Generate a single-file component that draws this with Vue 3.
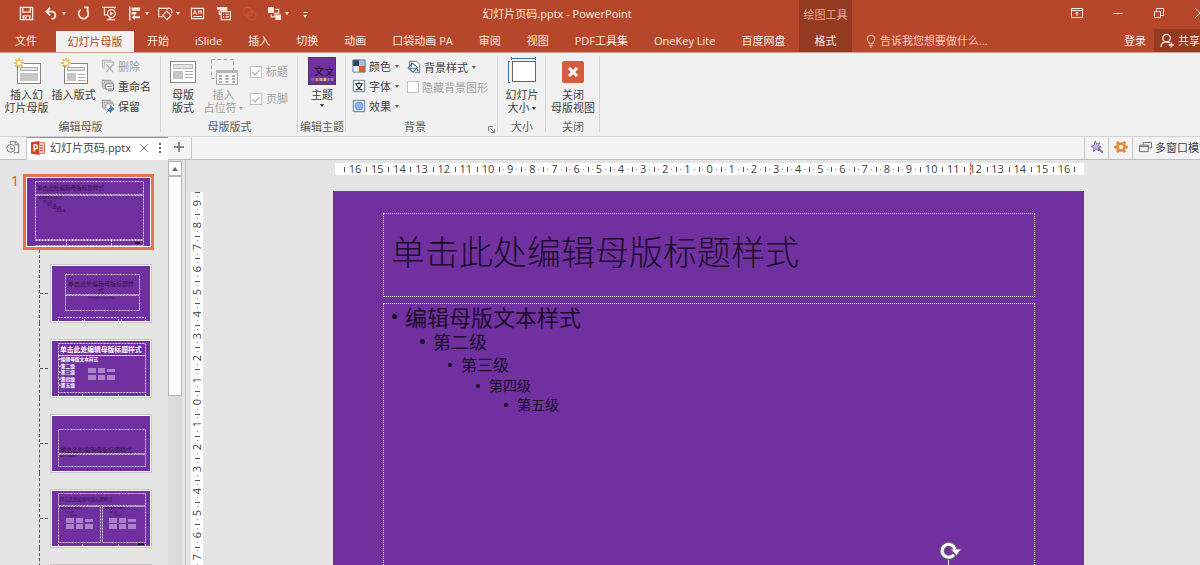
<script setup>
import { ref } from 'vue'

const tabsBefore = ['开始', 'iSlide', '插入', '切换', '动画', '口袋动画 PA', '审阅', '视图', 'PDF工具集', 'OneKey Lite', '百度网盘']
const hUnits = Array.from({ length: 33 }, (_, i) => Math.abs(16 - i))
const vUnits = Array.from({ length: 19 }, (_, i) => Math.abs(9 - i))
const levels = ['编辑母版文本样式', '第二级', '第三级', '第四级', '第五级']
const showTitle = ref(true)
const showFooter = ref(true)
const hideBg = ref(false)
const tell = ref('')
</script>

<template>
  <div class="app">
    <header class="head">
      <div class="title-row">
        <div class="qat">
          <button class="q" aria-label="保存">
            <svg viewBox="0 0 16 16"><path d="M1.500 1.500h13v13h-13zM4 1.500v5h8v-5M4.500 14.500v-4h7v4" fill="none" stroke="currentColor" stroke-width="1.500" /><path d="M6 11.500h2v3H6z" fill="currentColor" /></svg>
          </button>
          <button class="q split" aria-label="撤消">
            <svg viewBox="0 0 16 16"><path d="M2.500 6H9.500a4 4 0 0 1 0 7.500H8M6.500 2 2.500 6l4 4" fill="none" stroke="currentColor" stroke-width="2" /></svg><i class="caret"></i>
          </button>
          <button class="q" aria-label="重复">
            <svg viewBox="0 0 16 16"><path d="M5 4a5.200 5.200 0 1 0 6.500.500M8.500 1.500h4v4.500" fill="none" stroke="currentColor" stroke-width="1.800" /></svg>
          </button>
          <button class="q" aria-label="从头开始">
            <svg viewBox="0 0 16 16"><path d="M0 1.500h15M2.500 1.500v8h4M13.500 1.500v2M5 14.500h9" fill="none" stroke="currentColor" stroke-width="1.200" /><circle cx="10" cy="8" r="4.200" fill="none" stroke="currentColor" stroke-width="1.200" /><path d="M8.700 5.800 12.500 8l-3.800 2.200zM7 12.500h3v2H7z" fill="currentColor" /></svg>
          </button>
          <button class="q split" aria-label="对齐">
            <svg viewBox="0 0 16 16"><path d="M3 .5v15" stroke="currentColor" stroke-width="1.500" /><path d="M5 1.500h9v3.500H5zM5 6.500h5v2.500H5zM5 12l3.500-3v2h5.500v2H8.500v2z" fill="currentColor" /></svg><i class="caret"></i>
          </button>
          <button class="q split" aria-label="形状">
            <svg viewBox="0 0 16 16"><g fill="none" stroke="currentColor" stroke-width="1.200"><path d="M5 11.500H.8v-9h9V4" /><path d="M9.500 5.500 14 10l-4.500 4.500L5 10z" /><path d="M10 2.600a3.600 3.600 0 0 1 4.500 5" /></g></svg><i class="caret"></i>
          </button>
          <button class="q" aria-label="文本框">
            <svg viewBox="0 0 16 16"><path d="M1.500 2.500h13v11h-13zM8.500 5.500h4.500M8.500 7.500h4.500M3.500 11.200h9.500" fill="none" stroke="currentColor" stroke-width="1.200" /><path d="M3.300 9 5.200 4.700 7.100 9M4 7.600h2.400" fill="none" stroke="currentColor" /></svg>
          </button>
          <button class="q" aria-label="版式">
            <svg viewBox="0 0 16 16"><path d="M1 1h11v4H4V4H1z" fill="currentColor" /><path d="M5.500 6h10v8.500h-10zM7.500 8.800h1M10 8.800h4M7.500 11.500h1M10 11.500h4M3.500 5v4h2" fill="none" stroke="currentColor" stroke-width="1.300" /></svg>
          </button>
          <button class="q faded" aria-label="合并形状" disabled>
            <svg viewBox="0 0 16 16"><g fill="none" stroke="currentColor" stroke-width="1.300"><circle cx="6" cy="6" r="4.500" /><circle cx="10.500" cy="10" r="4.500" /></g></svg>
          </button>
          <button class="q split" aria-label="组合">
            <svg viewBox="0 0 16 16"><path d="M1 1h6.500v6.500H1zM9 9h6v6H9z" fill="currentColor" /><path d="M9 3.500h3.500V7.500H8.500v4H4.500V9" fill="none" stroke="currentColor" stroke-width="1.300" /></svg><i class="caret"></i>
          </button>
          <button class="q more" aria-label="自定义快速访问工具栏"><i class="dash"></i><i class="caret"></i></button>
        </div>
        <h1 class="title">幻灯片页码.pptx - PowerPoint</h1>
        <div class="ctx ctx-name">绘图工具</div>
        <div class="end win">
          <button aria-label="功能区显示选项"><svg viewBox="0 0 12 12"><path d="M.5 1.500h11v9H.5zM.5 3.500h11M6 9V5M4 7l2-2 2 2" fill="none" stroke="currentColor" /></svg></button>
          <button aria-label="最小化"><svg viewBox="0 0 12 12"><path d="M1.500 6.500h9" stroke="currentColor" /></svg></button>
          <button aria-label="还原"><svg viewBox="0 0 12 12"><path d="M1.500 4.500h6v6h-6zM3.500 4V1.500h7v7H8" fill="none" stroke="currentColor" /></svg></button>
          <button aria-label="关闭"><svg viewBox="0 0 12 12"><path d="m1.500 1.500 9 9M10.500 1.500l-9 9" stroke="currentColor" /></svg></button>
        </div>
      </div>
      <div class="tab-row">
        <nav class="tabs">
          <button class="tab file">文件</button>
          <button class="tab on">幻灯片母版</button>
          <button v-for="t in tabsBefore" :key="t" class="tab">{{ t }}</button>
        </nav>
        <button class="ctx">格式</button>
        <div class="end tools">
          <label class="tell">
            <svg viewBox="0 0 12 16"><path d="M4 11.500C4 9 1.500 8.500 1.500 5.500a4.500 4.500 0 0 1 9 0c0 3-2.500 3.500-2.500 6zM4 13.500h4M5 15.300h2" fill="none" stroke="currentColor" stroke-width="1.100" /></svg>
            <input v-model="tell" type="text" placeholder="告诉我您想要做什么..." aria-label="告诉我您想要做什么">
          </label>
          <button class="login">登录</button>
          <button class="share">
            <svg viewBox="0 0 16 16"><circle cx="7" cy="5.500" r="4" fill="none" stroke="currentColor" stroke-width="1.400" /><path d="M1 15c0-3.500 2.500-5.500 6-5.500 1.500 0 2.500.3 3.500 1M12 10v5.500M9.300 12.800h5.500" fill="none" stroke="currentColor" stroke-width="1.400" /></svg>
            共享
          </button>
        </div>
      </div>
    </header>

    <section class="ribbon" aria-label="幻灯片母版">
      <div class="group g-edit">
        <div class="body">
          <button class="big">
            <svg class="i28" viewBox="0 0 28 28"><rect x="4.500" y="6.500" width="23" height="20" fill="#fff" stroke="#858585" /><path d="M7.500 10.500h17v3h-17z" fill="#e4e4e4" stroke="#aaa" /><path d="M7 16h18v8H7z" fill="#c6c6c6" /><g stroke="#ecc46c" stroke-width="2"><path d="M6 1v10M1 6h10M2.500 2.500l7 7M9.500 2.500l-7 7" /></g><circle cx="6" cy="6" r="2" fill="#fff8e0" /></svg>
            <span>插入幻<br>灯片母版</span>
          </button>
          <button class="big">
            <svg class="i28" viewBox="0 0 28 28"><rect x="4.500" y="6.500" width="23" height="20" fill="#fff" stroke="#858585" /><path d="M7.500 10.500h17v3h-17z" fill="#e4e4e4" stroke="#aaa" /><path d="M7 16h9v8H7z" fill="#c6c6c6" /><path d="M18 17.500h7M18 20.500h7M18 23.500h7" stroke="#aaa" /><g stroke="#ecc46c" stroke-width="2"><path d="M6 1v10M1 6h10M2.500 2.500l7 7M9.500 2.500l-7 7" /></g><circle cx="6" cy="6" r="2" fill="#fff8e0" /></svg>
            <span>插入版式</span>
          </button>
          <div class="stack">
            <button class="small" disabled><svg viewBox="0 0 16 16"><path d="M1.500 10V1.500H12M3.500 12V3.500h11V7" fill="none" stroke="#aaa" /><path d="m6 6 8 9M14 6l-8 9" stroke="#aaa" stroke-width="1.500" /></svg>删除</button>
            <button class="small"><svg viewBox="0 0 16 16"><path d="M1.500 10V1.500H12M3.500 12V3.500H14" fill="none" stroke="#888" /><path d="M5.500 5.500h9v6h-9z" fill="#fff" stroke="#666" /><path d="M7 8.500h6M8 13.500h5l1.500-2" fill="none" stroke="#666" /></svg>重命名</button>
            <button class="small"><svg viewBox="0 0 16 16"><path d="M1.500 10V1.500H12M3.500 12V3.500H14M5.500 13V5.500h9V8" fill="none" stroke="#888" /><path d="m10.500 7.500 4.500 4-1.500.5-2 2.500-.5 1-3.500-3.500 1.500-.5 2-2zM8.500 13 6 15.500" fill="#4a80b8" stroke="#4a80b8" /></svg>保留</button>
          </div>
        </div>
        <h2>编辑母版</h2>
      </div>
      <div class="group g-layout">
        <div class="body">
          <button class="big">
            <svg class="i28" viewBox="0 0 28 28"><rect x="1.500" y="4.500" width="25" height="21" fill="#fff" stroke="#858585" /><path d="M4.500 7.500h19v4h-19z" fill="#e4e4e4" stroke="#b5b5b5" /><path d="M4 14h10v8H4z" fill="#c6c6c6" /><path d="M16 14.500h8M16 17.500h8M16 20.500h8" stroke="#aaa" /></svg>
            <span>母版<br>版式</span>
          </button>
          <button class="big wide" disabled>
            <svg class="i28" viewBox="0 0 28 28"><path d="M1.500 2.500h22v19h-22z" fill="none" stroke="#aaa" stroke-dasharray="4 2" /><rect x="6.500" y="13.500" width="21" height="14" fill="#f6f6f6" stroke="#aaa" /><path d="M6 13h22v3H6z" fill="#b5b5b5" /><path d="M9 19h3M15.500 19h3M22 19h3M9 22h3M15.500 22h3M22 22h3M9 25h3M15.500 25h3M22 25h3" stroke="#999" stroke-width="1.500" /></svg>
            <span>插入<br>占位符 <i class="caret"></i></span>
          </button>
          <div class="checks">
            <label><input v-model="showTitle" type="checkbox" disabled>标题</label>
            <label><input v-model="showFooter" type="checkbox" disabled>页脚</label>
          </div>
        </div>
        <h2>母版版式</h2>
      </div>
      <div class="group g-theme">
        <div class="body">
          <button class="big theme">
            <svg class="i28" viewBox="0 0 28 28"><rect x=".5" y=".5" width="27" height="27" fill="#7030a0" stroke="#4e3b5c" /><text x="6" y="18" font-size="10" fill="#160a20">文</text><text x="17" y="18" font-size="9" fill="#160a20">文</text><path d="M3.500 21h3v3h-3z" fill="#5a6fc0" /><path d="M7.500 21h3v3h-3z" fill="#d9824f" /><path d="M11.500 21h3v3h-3z" fill="#b9a3c9" /><path d="M15.500 21h3v3h-3z" fill="#f0bd3c" /><path d="M19.500 21h2v3h-2z" fill="#5a8fd0" /><path d="M22.500 21h3v3h-3z" fill="#a5739b" /></svg>
            <span>主题</span><i class="caret"></i>
          </button>
        </div>
        <h2>编辑主题</h2>
      </div>
      <div class="group g-bg">
        <div class="body">
          <div class="stack">
            <button class="small"><svg viewBox="0 0 16 16"><path d="M1 1h7v7H1z" fill="#3a4451" /><path d="M8 1h7v7H8z" fill="#9dc3e6" /><path d="M1 8h7v7H1z" fill="#e9eef4" /><path d="M8 8h7v7H8z" fill="#d8622d" /><path d="M1 1h14v14H1z" fill="none" stroke="#5a7692" /></svg>颜色<i class="caret"></i></button>
            <button class="small"><svg viewBox="0 0 16 16"><path d="M1.500 1.500h13v13h-13z" fill="#fff" stroke="#50708f" /><path d="M8 3v2M3.500 5.500h9M5 6c1 3 3.500 6 7 6.500M11 6c-1 3-3.500 6-7 6.500" fill="none" stroke="#222" stroke-width="1.200" /></svg>字体<i class="caret"></i></button>
            <button class="small"><svg viewBox="0 0 16 16"><path d="M1.500 1.500h13v13h-13z" fill="#e9f0fa" stroke="#50709f" /><circle cx="8" cy="8" r="4.500" fill="#8fb4e6" stroke="#5c88c4" /></svg>效果<i class="caret"></i></button>
          </div>
          <div class="stack">
            <button class="small"><svg viewBox="0 0 16 16"><path d="M3 7V1.500h8l3.500 3.500v9.500H9" fill="#fff" stroke="#6b6b6b" /><path d="m6 3.500 6 5-5 5.500-5.500-5z" fill="#fff" stroke="#3f6b94" stroke-width="1.300" /><path d="M5 8V3M2.500 9.500h8" stroke="#3f6b94" /><path d="M12 9c1.500 2 1.500 4 0 4s-1-2 0-4" fill="#3f6b94" /></svg>背景样式<i class="caret"></i></button>
            <label class="small dis"><input v-model="hideBg" type="checkbox" disabled>隐藏背景图形</label>
          </div>
        </div>
        <h2>背景</h2>
        <button class="launch" aria-label="设置背景格式"><svg viewBox="0 0 8 8"><path d="M.5 6V.5H6M3 3l4 4M7.500 3.500v4h-4" fill="none" stroke="#666" /></svg></button>
      </div>
      <div class="group g-size">
        <div class="body">
          <button class="big">
            <svg class="i28" viewBox="0 0 28 28"><path d="M3 1.500h25M3.500 0v3M27.500 0v3M.5 4.500v21M0 4.500h2M0 25.500h2" stroke="#41719c" /><rect x="4.500" y="4.500" width="23" height="20" fill="#fff" stroke="#666" /></svg>
            <span>幻灯片<br>大小 <i class="caret"></i></span>
          </button>
        </div>
        <h2>大小</h2>
      </div>
      <div class="group g-close">
        <div class="body">
          <button class="big">
            <svg class="i28" viewBox="0 0 28 28"><rect x="3" y="4" width="22" height="22" rx="2" fill="#d35d3d" /><path d="m10 11 8 8M18 11l-8 8" stroke="#fff" stroke-width="3" /></svg>
            <span>关闭<br>母版视图</span>
          </button>
        </div>
        <h2>关闭</h2>
      </div>
    </section>

    <div class="docbar">
      <button class="cell recent" aria-label="最近文档"><svg viewBox="0 0 16 16"><path d="M5 4V1.500h6L14.500 5v9.500H9M10.500 1.500v4h4" fill="none" stroke="#666" /><circle cx="5.500" cy="9.500" r="4.500" fill="#f3f3f3" stroke="#666" /><path d="M5.500 7v3H8" fill="none" stroke="#666" /></svg></button>
      <div class="doc">
        <svg class="ppt" viewBox="0 0 16 16"><path d="M8 2h7.500v12H8z" fill="#fff" stroke="#d04423" /><path d="M10 5h4M10 8h4M10 11h4" stroke="#d04423" stroke-width="1.500" /><path d="M0 1.500 9.500 0v16L0 14.500z" fill="#d04423" /><path d="M3.500 12V4.500h1.800a2 2 0 0 1 0 4.300H3.500" fill="none" stroke="#fff" stroke-width="1.600" /></svg>
        <span>幻灯片页码.pptx</span>
        <button aria-label="关闭文档"><svg class="x" viewBox="0 0 12 12"><path d="m1.500 1.500 9 9M10.500 1.500l-9 9" stroke="#777" stroke-width="1.200" /></svg></button>
        <button class="dots" aria-label="更多"><i></i><i></i><i></i></button>
      </div>
      <button class="cell plus" aria-label="新建"><svg viewBox="0 0 12 12"><path d="M6 1v10M1 6h10" stroke="#666" stroke-width="1.500" /></svg></button>
      <div class="fill"></div>
      <button class="cell tool" aria-label="魔棒"><svg viewBox="0 0 16 16"><path d="m6 1 1.500 3.500L11 3 9.500 6.500 13 8 9.500 9l1 3.500L7 10.500 4 13l.5-4L1 7.500l3.500-1.300z" fill="#c9b6e0" stroke="#7f66a8" /><path d="m9.500 9.500 5 5" stroke="#6f6f86" stroke-width="2" /></svg></button>
      <button class="cell tool" aria-label="设置"><svg viewBox="0 0 16 16"><g fill="#e58a3c"><circle cx="8" cy="8" r="5.500" /><circle cx="4.500" cy="3.500" r="2" /><circle cx="11.500" cy="3.500" r="2" /><circle cx="14" cy="8" r="2" /><circle cx="11.500" cy="12.500" r="2" /><circle cx="4.500" cy="12.500" r="2" /><circle cx="2" cy="8" r="2" /></g><circle cx="8" cy="8" r="2.600" fill="#f6f1ec" /></svg></button>
      <button class="cell multi"><svg viewBox="0 0 14 12"><path d="M4.500 3V.5h9v6H10M.5 3.500H10v7H.5zM.5 5H10" fill="none" stroke="#666" /></svg>多窗口模式</button>
    </div>

    <main class="work">
      <aside class="pane">
        <div class="thumbs">
          <div class="row first">
            <span class="num">1</span>
            <svg class="thumb sel" viewBox="0 0 123 68">
              <rect width="123" height="68" fill="#7030a0" />
              <g class="ph"><path d="M8.500 3.500h108v13h-108zM8.500 17.500h108v44h-108zM8.500 62.500h108v5h-108M39.500 62v6M84.500 62v6" /></g>
              <text x="10" y="12" font-size="5.600">单击此处编辑母版标题样式</text>
              <g font-size="3"><text x="10" y="21">•编辑母版文本样式</text><text x="15" y="25">•第二级</text><text x="19" y="28">•第三级</text><text x="24" y="31">•第四级</text><text x="28" y="34">•第五级</text></g>
              <path d="M108 64h5v2h-5z" fill="#231033" />
            </svg>
          </div>
          <div class="row child">
            <svg class="thumb" viewBox="0 0 98 55">
              <rect width="98" height="55" fill="#7030a0" />
              <g class="ph"><path d="M13.500 8.500h74v20h-74zM13.500 29.500h74v15h-74zM6.500 55v-3.500h24V55M32.500 55v-3.500h34V55M69.500 55v-3.500h24V55" /></g>
              <text x="49" y="20" font-size="6" text-anchor="middle">单击此处编辑母版标题样</text><text x="49" y="27" font-size="6" text-anchor="middle">式</text><text x="49" y="33" font-size="2" text-anchor="middle">单击此处编辑母版副标题样式</text>
            </svg>
          </div>
          <div class="row child">
            <svg class="thumb" viewBox="0 0 98 55">
              <rect width="98" height="55" fill="#7030a0" />
              <g class="ph"><path d="M6.500 2.500h87v12h-87zM6.500 14.500h87v37h-87zM30.500 55v-3.500M66.500 55v-3.500M6.500 55v-3.500M93.500 55v-3.500" /></g>
              <g class="w"><text x="8" y="11" font-size="6.800">单击此处编辑母版标题样式</text><g font-size="4.700"><text x="7" y="20">•编辑母版文本样式</text><text x="7" y="27">•第二级</text><text x="7" y="33">•第三级</text><text x="7" y="40">•第四级</text><text x="7" y="46">•第五级</text></g></g>
              <g class="pics" transform="translate(36 27)"><path d="M0 0h8v5H0zM10 0h7v5h-7zM19 1h8v3h-8zM0 7h8v5H0zM10 7h7v5h-7zM19 7h8v5h-8z" /></g>
            </svg>
          </div>
          <div class="row child">
            <svg class="thumb" viewBox="0 0 98 55">
              <rect width="98" height="55" fill="#7030a0" />
              <g class="ph"><path d="M6.500 13.500h87v24h-87zM6.500 38.500h87v12h-87z" /></g>
              <text x="8" y="36" font-size="6">单击此处编辑母版标题样式</text><text x="8" y="41" font-size="2">编辑母版文本样式</text>
            </svg>
          </div>
          <div class="row child">
            <svg class="thumb" viewBox="0 0 98 55">
              <rect width="98" height="55" fill="#7030a0" />
              <g class="ph"><path d="M6.500 2.500h87v12h-87zM6.500 15.500h42v36h-42zM50.500 15.500h43v36h-43zM30.500 55v-3.500M66.500 55v-3.500M6.500 55v-3.500M93.500 55v-3.500" /></g>
              <text x="8" y="10" font-size="4.400">单击此处编辑母版标题样式</text>
              <g font-size="2.500"><text x="8" y="18">•编辑母版文本样式</text><text x="52" y="18">•编辑母版文本样式</text><text x="13" y="22">•第二级</text><text x="57" y="22">•第二级</text><text x="17" y="25">•第三级</text><text x="61" y="25">•第三级</text></g>
              <g class="pics"><path transform="translate(14 27)" d="M0 0h8v5H0zM10 0h7v5h-7zM19 1h8v3h-8zM0 6h8v5H0zM10 6h7v5h-7zM19 6h8v5h-8z" /><path transform="translate(57 27)" d="M0 0h8v5H0zM10 0h7v5h-7zM19 1h8v3h-8zM0 6h8v5H0zM10 6h7v5h-7zM19 6h8v5h-8z" /></g>
              <path d="M86 52h6v2h-6z" fill="#231033" />
            </svg>
          </div>
          <div class="row child"><svg class="thumb" viewBox="0 0 98 55"><rect width="98" height="55" fill="#7030a0" /></svg></div>
        </div>
        <div class="scroll"><button aria-label="向上滚动"><i></i></button><div class="grip"></div></div>
      </aside>
      <div class="vruler"><div v-for="(n, i) in vUnits" :key="i" class="u"><b></b><span>{{ n }}</span><b></b></div></div>
      <div class="stage">
        <div class="hruler"><div v-for="(n, i) in hUnits" :key="i" class="u"><b v-if="n < 10"></b><span>{{ n }}</span><b v-if="n < 10"></b></div><i class="mark"></i></div>
        <article class="slide">
          <div class="holder head-ph">单击此处编辑母版标题样式</div>
          <ul class="holder body-ph">
            <li v-for="(l, i) in levels" :key="l" :class="'l' + (i + 1)">{{ l }}</li>
          </ul>
          <svg class="rotate" viewBox="0 0 24 32"><path d="M10.500 20v12" stroke="#e8e0ee" /><path d="M16 14.500A6.500 6.500 0 1 1 17 9.500" fill="none" stroke="#6c6472" stroke-width="5" /><path d="m12.500 9 11 0-5 6.500z" fill="#fff" stroke="#6c6472" /><path d="M16 14.500A6.500 6.500 0 1 1 17 9.500" fill="none" stroke="#fff" stroke-width="3" /></svg>
        </article>
      </div>
    </main>
  </div>
</template>

<style>
body { margin: 0; overflow: hidden; }
</style>

<style scoped>
.app { height: 100vh; display: flex; flex-direction: column; overflow: hidden; background: #e5e5e5; color: #3f3f3f; font: 11px/13px "Open Sans", "Noto Sans CJK SC", sans-serif; }
* { box-sizing: border-box; }
button { border: 0; background: none; padding: 0; color: inherit; font: inherit; white-space: nowrap; }
svg { display: block; flex: none; }
h1, h2 { margin: 0; font: inherit; }
.caret { display: inline-block; flex: none; border: 2px solid transparent; border-top: 3px solid currentColor; border-bottom: 0; vertical-align: 2px; }

.head { flex: none; background: #b7472a; color: #fbe9e2; overflow: hidden; border-bottom: 1px solid #dba293; }
.title-row { display: flex; height: 29px; }
.qat { display: flex; padding: 0 0 3px 13px; flex: none; }
.q { display: flex; align-items: center; justify-content: center; width: 26px; gap: 3px; }
.q svg { width: 15px; height: 15px; }
.split { width: 31px; }
.more { width: 24px; flex-direction: column; gap: 2px; padding-top: 3px; }
.dash { width: 5px; height: 1px; background: currentColor; }
.title { flex: 1; text-align: center; line-height: 28px; padding-right: 2px; }
.ctx { flex: none; width: 53px; background: #933a20; text-align: center; }
.ctx-name { line-height: 30px; color: #e5ab98; }
.end { flex: none; width: 348px; display: flex; }
.win { padding-left: 204px; }
.win button { flex: none; width: 41px; display: flex; align-items: center; justify-content: center; padding-bottom: 3px; }
.win svg { width: 12px; height: 12px; }
.tab-row { display: flex; height: 23px; }
.tabs { flex: 1; display: flex; min-width: 0; }
.tab { padding: 0 13px; height: 23px; }
.tab.file { padding: 0 19px 0 15px; }
.tab.on { width: 78px; padding: 0 0 2px; margin-top: 2px; height: 22px; background: #f1f1f1; color: #b7472a; }
.tools { align-items: center; }
.tell { display: flex; align-items: center; gap: 4px; flex: 1; padding-left: 14px; color: #f4d3c8; }
.tell svg { width: 10px; height: 14px; }
.tell input { border: 0; padding: 0; outline: 0; background: none; color: inherit; font: inherit; width: 160px; }
.tell input::placeholder { color: #f1c9bc; opacity: 1; }
.login { padding: 0 8px; }
.share { display: flex; align-items: center; gap: 3px; width: 46px; height: 23px; padding-left: 6px; background: #933a20; }
.share svg { width: 15px; height: 15px; }

.ribbon { flex: none; display: flex; height: 84px; background: #f1f1f1; border-bottom: 1px solid #d2d2d2; }
.group { position: relative; display: flex; flex-direction: column; padding-top: 4px; }
.group::after { content: ""; position: absolute; right: 0; top: 3px; bottom: 4px; width: 1px; background: #d6d6d6; }
.body { display: flex; flex: 1; }
.group h2 { text-align: center; line-height: 13px; padding-bottom: 3px; color: #5c5c5c; }
.g-edit { width: 161px; } .g-layout { width: 137px; } .g-theme { width: 48px; }
.g-bg { width: 152px; } .g-size { width: 48px; } .g-close { width: 54px; }
.g-edit .body { padding-left: 3px; }
.g-layout .body { padding-left: 5px; }
.g-bg .body { padding-left: 6px; gap: 8px; }
.g-bg h2 { padding-right: 14px; }
.g-theme .body, .g-size .body, .g-close .body { justify-content: center; }
.big { width: 47px; display: flex; flex-direction: column; align-items: center; gap: 3px; text-align: center; line-height: 13px; }
.g-layout .big:first-child { width: 34px; }
.i28 { width: 28px; height: 28px; }
button:disabled, .dis, .checks { color: #a3a3a3; }
.q.faded:disabled { color: #c4583a; }
.stack { display: flex; flex-direction: column; }
.g-edit .stack { padding-left: 4px; }
.small { display: flex; align-items: center; gap: 3px; height: 20px; }
.small svg { width: 14px; height: 14px; }
.small .caret { margin-left: 1px; color: #666; }
.g-edit .small, .g-bg .stack:first-child .small { margin-top: -1px; margin-bottom: 1px; }
.checks { display: flex; flex-direction: column; gap: 14px; padding: 8px 0 0 3px; }
.checks label { display: flex; align-items: center; gap: 4px; }
input[type=checkbox] { appearance: none; flex: none; margin: 0; width: 12px; height: 12px; border: 1px solid #c3c3c3; background: #fff; }
input[type=checkbox]:checked::after { content: ""; display: block; width: 3px; height: 6px; margin: 1px 0 0 3px; border: solid #a5a5a5; border-width: 0 1px 1px 0; transform: rotate(45deg); }
.launch { position: absolute; right: 3px; bottom: 3px; }
.launch svg { width: 7px; height: 7px; }

.docbar { flex: none; display: flex; height: 23px; background: #f4f4f4; border-bottom: 1px solid #bdbdbd; }
.cell { display: flex; align-items: center; justify-content: center; padding-bottom: 2px; border-right: 1px solid #c8c8c8; }
.recent { width: 27px; } .recent svg { width: 14px; height: 14px; }
.doc { display: flex; align-items: center; width: 141px; height: 23px; padding: 0 4px 3px; background: #fff; border-top: 1px solid #e8714f; }
.ppt { width: 14px; height: 14px; margin-right: 5px; }
.doc span { flex: 1; white-space: nowrap; }
.x { width: 10px; height: 10px; }
.dots { display: flex; flex-direction: column; gap: 2px; padding: 0 3px 0 10px; }
.dots i { width: 2px; height: 2px; background: #666; }
.plus { width: 24px; padding-right: 2px; } .plus svg { width: 12px; height: 12px; }
.fill { flex: 1; border-right: 1px solid #c8c8c8; }
.tool { width: 24px; } .tool svg { width: 14px; height: 14px; }
.multi { width: 67px; flex: none; justify-content: flex-start; gap: 3px; padding-left: 6px; border: 0; overflow: hidden; }
.multi svg { width: 13px; height: 11px; }

.work { flex: 1; display: flex; min-height: 0; overflow: hidden; }
.pane { flex: none; width: 186px; display: flex; border-right: 1px solid #c4c4c4; }
.thumbs { width: 168px; padding-top: 14px; }
.row { position: relative; display: flex; }
.num { width: 23px; padding-left: 11px; font-size: 14px; line-height: 14px; color: #d0583a; }
.thumb { width: 102px; height: 59px; padding: 1px; border: 1px solid #c9c4cd; background: #fff; }
.thumb.sel { width: 131px; height: 76px; border: 3px solid #e8714f; }
.child { padding: 14px 0 0 50px; }
.child + .child { padding-top: 16px; }
.child::before { content: ""; position: absolute; left: 39px; top: 0; bottom: 0; border-left: 1px dashed #555; }
.child::after { content: ""; position: absolute; left: 40px; bottom: 29px; width: 8px; border-top: 1px dashed #555; }
.thumb text { fill: #32124c; }
.thumb .w text { fill: #fff; font-weight: 700; }
.ph { fill: none; stroke: #e4d6ee; stroke-dasharray: 2 1; }
.pics { fill: #ab85c8; }
.scroll { flex: none; width: 14px; display: flex; flex-direction: column; background: #dbdbdb; }
.scroll button { height: 15px; margin-top: 1px; border: 1px solid #b5b5b5; background: #fff; display: flex; align-items: center; justify-content: center; }
.scroll i { border: 3px solid transparent; border-bottom: 4px solid #666; border-top: 0; }
.grip { height: 220px; border: 1px solid #b5b5b5; background: #fff; }

.u { flex: 1; display: flex; align-items: center; justify-content: center; gap: 3px; position: relative; min-width: 0; min-height: 0; }
.u::before, .u:last-of-type::after { content: ""; position: absolute; background: #555; }
.u b { width: 1px; height: 1px; background: #888; flex: none; }
.hruler { position: relative; flex: none; display: flex; height: 12px; margin: 3px 0 0 2px; padding: 0 9px; background: #fff; line-height: 11px; }
.hruler .u { align-items: flex-start; }
.hruler .u b { margin-top: 6px; }
.hruler .u::before { left: 0; top: 4px; width: 1px; height: 5px; }
.hruler .u:last-of-type::after { right: 0; top: 4px; width: 1px; height: 5px; }
.mark { position: absolute; left: 635px; top: 0; height: 12px; border-left: 1px dashed #d0583a; }
.vruler { flex: none; width: 12px; height: 421px; margin: 32px 0 0 5px; display: flex; flex-direction: column; background: #fff; }
.vruler .u { flex-direction: column; }
.vruler .u::before { top: 0; left: 4px; width: 5px; height: 1px; }
.vruler span { writing-mode: vertical-rl; transform: rotate(180deg); line-height: 12px; }
.stage { flex: 1; display: flex; flex-direction: column; padding: 0 116px 0 130px; min-width: 0; }
.slide { position: relative; flex: none; margin-top: 16px; aspect-ratio: 16 / 9; padding: 22px 49px 20px 50px; background: #7030a0; display: flex; flex-direction: column; gap: 6px; color: #1c0a2c; }
.holder { margin: 0; border: 1px dotted #fff; }
.head-ph { height: 84px; padding-left: 7px; font-size: 34px; line-height: 76px; font-weight: 300; }
.body-ph { flex: 1; list-style: none; padding: 0 0 0 7px; }
.body-ph li { position: relative; padding-left: 14px; }
.body-ph li::before { content: ""; position: absolute; left: 1px; top: 50%; width: 5px; height: 5px; margin-top: -3px; border-radius: 50%; background: currentColor; }
.body-ph .l1 { font-size: 22px; line-height: 26px; }
.body-ph .l2 { font-size: 18px; line-height: 24px; margin-left: 28px; }
.body-ph .l3 { font-size: 16px; line-height: 22px; margin-left: 56px; }
.body-ph .l4 { font-size: 14px; line-height: 19px; margin-left: 84px; }
.body-ph .l5 { font-size: 14px; line-height: 19px; margin-left: 112px; }
.body-ph .l3::before, .body-ph .l4::before, .body-ph .l5::before { width: 4px; height: 4px; margin-top: -2px; }
.rotate { position: absolute; left: 81%; top: 349px; width: 24px; height: 32px; margin-left: -3px; }
</style>
